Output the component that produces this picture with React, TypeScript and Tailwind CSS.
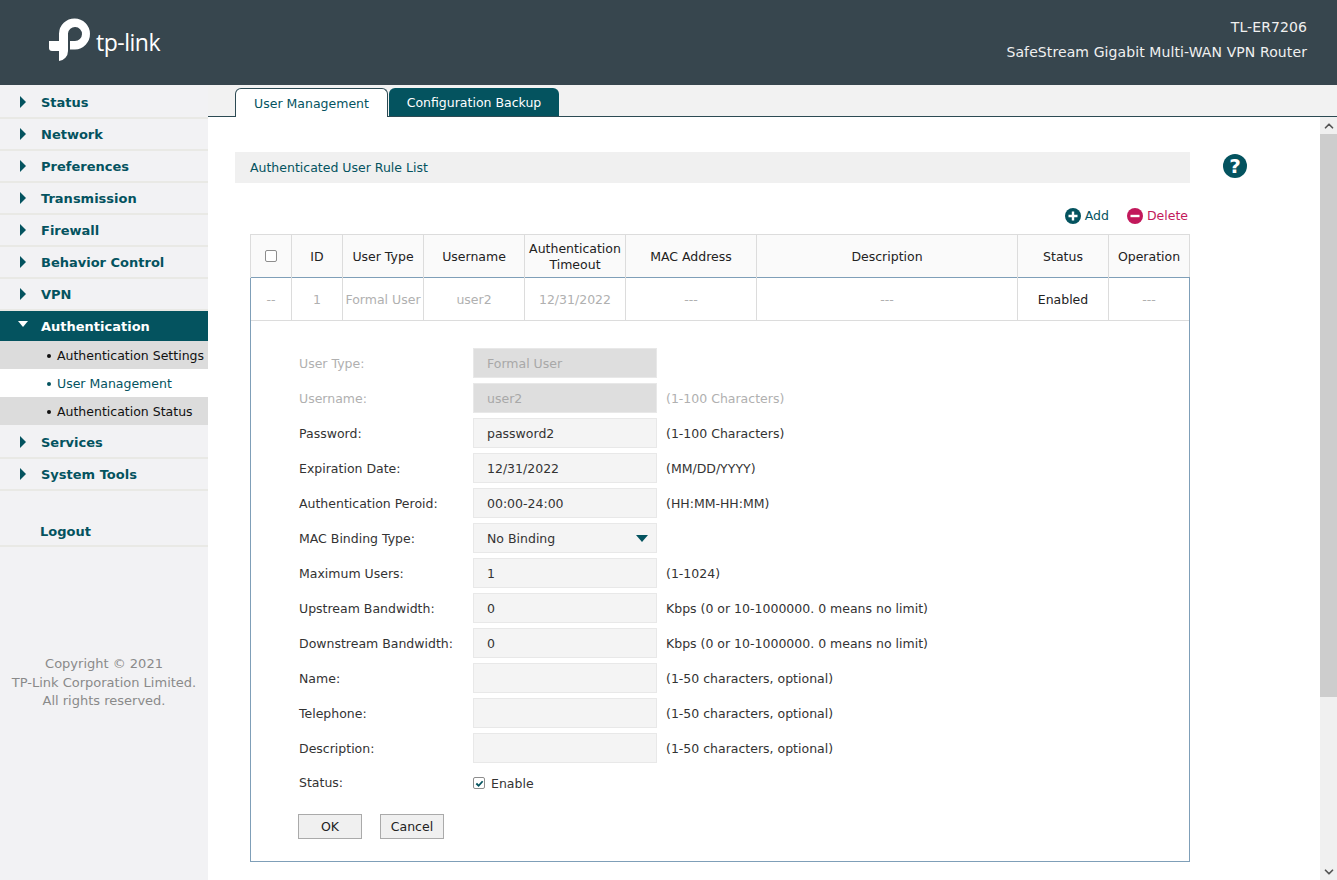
import { ChevronUp, ChevronDown } from "lucide-react";

const menuTop = ["Status", "Network", "Preferences", "Transmission", "Firewall", "Behavior Control", "VPN"];
const menuBottom = ["Services", "System Tools"];

const formRows = [
  { label: "User Type:", value: "Formal User", off: true },
  { label: "Username:", value: "user2", off: true, hint: "(1-100 Characters)" },
  { label: "Password:", value: "password2", hint: "(1-100 Characters)" },
  { label: "Expiration Date:", value: "12/31/2022", hint: "(MM/DD/YYYY)" },
  { label: "Authentication Peroid:", value: "00:00-24:00", hint: "(HH:MM-HH:MM)" },
  { label: "MAC Binding Type:", value: "No Binding", select: true },
  { label: "Maximum Users:", value: "1", hint: "(1-1024)" },
  { label: "Upstream Bandwidth:", value: "0", hint: "Kbps (0 or 10-1000000. 0 means no limit)" },
  { label: "Downstream Bandwidth:", value: "0", hint: "Kbps (0 or 10-1000000. 0 means no limit)" },
  { label: "Name:", value: "", hint: "(1-50 characters, optional)" },
  { label: "Telephone:", value: "", hint: "(1-50 characters, optional)" },
  { label: "Description:", value: "", hint: "(1-50 characters, optional)" },
];

function Caret() {
  return <span className="w-0 h-0 border-y-[6px] border-y-transparent border-l-[6px] border-l-[#04535f] -mt-[2px]" />;
}

function MenuItem({ name }: { name: string }) {
  return (
    <div className="h-[32px] pt-[2px] flex items-center border-b-2 border-[#e9e9e5]">
      <div className="w-[41px] pl-[20px] flex items-center">
        <Caret />
      </div>
      <span className="font-bold text-[#04535f]">{name}</span>
    </div>
  );
}

function SubItem({ name, active }: { name: string; active?: boolean }) {
  return (
    <div className={`h-[28px] pt-[2px] flex items-center text-[12.5px] ${active ? "bg-white text-[#04535f]" : "bg-[#dcdcdc] text-[#111]"}`}>
      <span className="w-[4px] h-[4px] shrink-0 rounded-full bg-current ml-[47px] mr-[6px]" />
      <span className="whitespace-nowrap">{name}</span>
    </div>
  );
}

function Sidebar() {
  return (
    <div className="w-[208px] shrink-0 bg-[#f2f2f4] text-[13px] pt-[2px]">
      {menuTop.map((m) => (
        <MenuItem key={m} name={m} />
      ))}
      <div className="h-[30px] pt-[2px] bg-[#04535f] flex items-center">
        <div className="w-[41px] pl-[18px] flex items-center">
          <span className="w-0 h-0 border-x-[5.5px] border-x-transparent border-t-[6px] border-t-white -mt-[7px]" />
        </div>
        <span className="font-bold text-white">Authentication</span>
      </div>
      <SubItem name="Authentication Settings" />
      <SubItem name="User Management" active />
      <SubItem name="Authentication Status" />
      <div className="h-[2px]" />
      {menuBottom.map((m) => (
        <MenuItem key={m} name={m} />
      ))}
      <div className="h-[24px]" />
      <div className="h-[32px] flex items-center pl-[40px] pt-[3px] border-b-2 border-[#e9e9e5] font-bold text-[#04535f]">Logout</div>
      <div className="mt-[108px] text-center text-[#8a8a8a] leading-[18.5px]">
        <div>Copyright © 2021</div>
        <div>TP-Link Corporation Limited.</div>
        <div>All rights reserved.</div>
      </div>
    </div>
  );
}

function Tabs() {
  return (
    <div className="h-[32px] shrink-0 bg-[#f2f2f2] border-b border-[#2c4a53] pl-[27px] flex items-end gap-px">
      <div className="w-[153px] h-[29px] pt-[2px] -mb-px bg-white border border-b-0 border-[#2c4a53] rounded-t-[6px] flex items-center justify-center text-[#04535f]">
        User Management
      </div>
      <div className="w-[170px] h-[28px] pt-[2px] bg-[#04535f] rounded-t-[6px] flex items-center justify-center text-white">
        Configuration Backup
      </div>
    </div>
  );
}

function Table() {
  const head = "border-l border-[#dcdcdc] font-normal text-[#222] bg-[#fafafa] text-center leading-[16px] pt-[2px]";
  const cell = "border-l border-[#dcdcdc] font-normal text-[#b0b0b0] text-center whitespace-nowrap pt-[2px]";
  return (
    <table className="table-fixed border-collapse w-[939px]">
      <colgroup>
        <col className="w-[41px]" />
        <col className="w-[51px]" />
        <col className="w-[81px]" />
        <col className="w-[101px]" />
        <col className="w-[101px]" />
        <col className="w-[131px]" />
        <col className="w-[261px]" />
        <col className="w-[91px]" />
        <col className="w-[81px]" />
      </colgroup>
      <thead>
        <tr className="h-[43px] border-t border-r border-[#dcdcdc]">
          <th className={head}>
            <span className="inline-block w-[12px] h-[12px] border border-[#8d8d8d] rounded-[2px] align-middle bg-white -mt-[3px]" />
          </th>
          <th className={head}>ID</th>
          <th className={head}>User Type</th>
          <th className={head}>Username</th>
          <th className={head}>
            Authentication
            <br />
            Timeout
          </th>
          <th className={head}>MAC Address</th>
          <th className={head}>Description</th>
          <th className={head}>Status</th>
          <th className={head}>Operation</th>
        </tr>
      </thead>
      <tbody>
        <tr className="h-[43px] border-t border-[#7f9fb8] border-b-[#dcdcdc] border-b">
          <td className="border-l border-[#7f9fb8] text-center text-[#b0b0b0] pt-[2px]">--</td>
          <td className={cell}>1</td>
          <td className={cell}>Formal User</td>
          <td className={cell}>user2</td>
          <td className={cell}>12/31/2022</td>
          <td className={cell}>---</td>
          <td className={cell}>---</td>
          <td className="border-l border-[#dcdcdc] text-center text-[#222] pt-[2px]">Enabled</td>
          <td className={`${cell} border-r border-r-[#7f9fb8]`}>---</td>
        </tr>
      </tbody>
    </table>
  );
}

function EditForm() {
  return (
    <div className="w-[940px] h-[541px] border border-t-0 border-[#7f9fb8] pl-[48px] pt-[27px] text-[#333]">
      {formRows.map((r) => (
        <div key={r.label} className="h-[35px] flex items-start">
          <div className={`w-[174px] h-[30px] pt-[2px] flex items-center whitespace-nowrap ${r.off ? "text-[#b0b0b0]" : ""}`}>
            {r.label}
          </div>
          <div
            className={`w-[184px] h-[30px] pl-[13px] pr-[14px] pt-[2px] flex items-center justify-between border border-[#e8e8e8] ${
              r.off ? "bg-[#dedede] text-[#a8a8a8]" : "bg-[#f4f4f4]"
            }`}
          >
            {r.value}
            {r.select && (
              <span className="w-0 h-0 -mr-[6px] -mt-[2px] border-x-[6px] border-x-transparent border-t-[7px] border-t-[#04535f]" />
            )}
          </div>
          {r.hint && (
            <div className={`ml-[9px] h-[30px] pt-[2px] flex items-center whitespace-nowrap ${r.off ? "text-[#b0b0b0]" : ""}`}>
              {r.hint}
            </div>
          )}
        </div>
      ))}
      <div className="h-[30px] flex items-center">
        <div className="w-[174px]">Status:</div>
        <span className="w-[12px] h-[12px] border border-[#8d8d8d] rounded-[2px] bg-white flex items-center justify-center">
          <svg viewBox="0 0 10 10" className="w-[9px] h-[9px]">
            <path d="M1.5 5 L4 7.5 L8.5 2.5" fill="none" stroke="#04535f" strokeWidth="2" />
          </svg>
        </span>
        <span className="ml-[6px] pt-[2px]">Enable</span>
      </div>
      <div className="mt-[16px] flex gap-[18px] -ml-px">
        <button className="w-[64px] h-[25px] pt-[2px] bg-[#f0f0f0] border border-[#aaa] text-[#222]">OK</button>
        <button className="w-[64px] h-[25px] pt-[2px] bg-[#f0f0f0] border border-[#aaa] text-[#222]">Cancel</button>
      </div>
    </div>
  );
}

export default function App() {
  return (
    <div className="w-[1337px] h-[880px] overflow-hidden bg-white flex flex-col text-[12.5px] font-['DejaVu_Sans',sans-serif]">
      {/* Header */}
      <div className="h-[85px] shrink-0 bg-[#37464e] flex items-center justify-between pl-[49px] pr-[30px] text-white">
        <div className="flex items-center">
          <svg viewBox="0 0 44 44" className="w-[44px] h-[44px] -mt-[5px]">
            <path
              d="M10 15.5 A15.5 15.5 0 1 1 26 31.5 L21 31.5 L21 23 L26 23 A7 7 0 1 0 19 15.5 L19 33 A10 10 0 0 1 10 43 Z"
              fill="#fff"
            />
            <path d="M0 23 H12 V33 H3 A3 3 0 0 1 0 30 Z" fill="#fff" />
          </svg>
          <span className="ml-[3px] -mt-[1px] text-[23px] tracking-[-0.5px] font-['Open_Sans',sans-serif] font-normal">
            tp-link
          </span>
        </div>
        <div className="text-right leading-[25px] text-[14px] tracking-[0.1px] text-[#f0f0f0] -mt-[6px]">
          <div>TL-ER7206</div>
          <div>SafeStream Gigabit Multi-WAN VPN Router</div>
        </div>
      </div>
      <div className="flex-1 flex min-h-0">
        <Sidebar />
        <div className="flex-1 flex flex-col min-w-0">
          <Tabs />
          <div className="flex-1 flex min-h-0">
            <div className="flex-1 pl-[27px] pt-[35px]">
              <div className="flex">
                <div className="w-[955px] h-[31px] pt-[2px] bg-[#f0f0f0] flex items-center pl-[15px] text-[#04535f]">
                  Authenticated User Rule List
                </div>
                <div className="ml-[33px] mt-[2px] w-[24px] h-[24px] rounded-full bg-[#04535f] text-white font-bold text-[20px] flex items-center justify-center">
                  ?
                </div>
              </div>
              <div className="w-[955px] h-[51px] flex items-center justify-end gap-[18px] pr-[2px] pt-[14px]">
                <span className="flex items-center gap-[4px] text-[#04535f]">
                  <svg viewBox="0 0 16 16" className="w-[16px] h-[16px]">
                    <circle cx="8" cy="8" r="8" fill="#04535f" />
                    <path d="M8 3.5V12.5M3.5 8H12.5" stroke="#fff" strokeWidth="2.4" />
                  </svg>
                  <span className="pt-[2px]">Add</span>
                </span>
                <span className="flex items-center gap-[4px] text-[#c2185b]">
                  <svg viewBox="0 0 16 16" className="w-[16px] h-[16px]">
                    <circle cx="8" cy="8" r="8" fill="#c2185b" />
                    <path d="M3.5 8H12.5" stroke="#fff" strokeWidth="2.4" />
                  </svg>
                  <span className="pt-[2px]">Delete</span>
                </span>
              </div>
              <div className="ml-[15px]">
                <Table />
                <EditForm />
              </div>
            </div>
            <div className="w-[17px] shrink-0 bg-[#f0f0f0] flex flex-col text-[#555]">
              <div className="h-[17px] flex items-center justify-center">
                <ChevronUp size={14} strokeWidth={3} />
              </div>
              <div className="h-[563px] bg-[#cdcdcd]" />
              <div className="flex-1" />
              <div className="h-[17px] flex items-center justify-center">
                <ChevronDown size={14} strokeWidth={3} />
              </div>
            </div>
          </div>
        </div>
      </div>
    </div>
  );
}
